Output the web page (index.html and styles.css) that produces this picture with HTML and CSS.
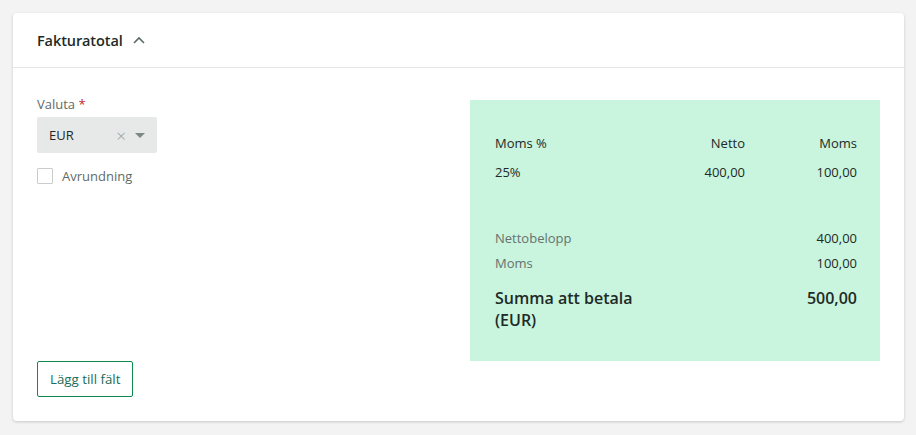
FILE: index.html
```html
<!DOCTYPE html>
<html lang="sv">
<head>
<meta charset="utf-8">
<title>Fakturatotal</title>
<link rel="stylesheet" href="styles.css">
</head>
<body>
<section class="card">
  <header class="card-head">
    <h2 class="title">Fakturatotal</h2>
    <svg class="chev" width="12" height="8" viewBox="0 0 12 8"><path d="M1 7 L6 2 L11 7" fill="none" stroke="#5b6b66" stroke-width="1.6"/></svg>
  </header>
  <div class="card-body">
    <div class="row">
      <div class="form">
        <label class="label">Valuta <span class="req">*</span></label>
        <div class="select">
          <span class="sel-val">EUR</span>
          <span class="sel-x">×</span>
          <span class="sel-arrow"></span>
        </div>
        <label class="check"><span class="box"></span><span class="check-text">Avrundning</span></label>
      </div>
      <div class="panel">
        <div class="vat-row vat-head">
          <span class="c1">Moms %</span><span class="c2">Netto</span><span class="c3">Moms</span>
        </div>
        <div class="vat-row">
          <span class="c1">25%</span><span class="c2">400,00</span><span class="c3">100,00</span>
        </div>
        <div class="sum-row first"><span class="muted">Nettobelopp</span><span>400,00</span></div>
        <div class="sum-row"><span class="muted">Moms</span><span>100,00</span></div>
        <div class="total-row"><span class="total-label">Summa att betala<br>(EUR)</span><span>500,00</span></div>
      </div>
    </div>
    <button class="btn">Lägg till fält</button>
  </div>
</section>
</body>
</html>
```
FILE: styles.css
```css
* { box-sizing: border-box; }
html, body { margin: 0; }
body {
  background: #f2f3f2;
  padding: 13px 12px 13px 13px;
  font-family: "Open Sans", "Noto Sans", sans-serif;
  font-size: 13px;
  color: #1d2a26;
}
.card {
  background: #fff;
  border-radius: 4px;
  box-shadow: 0 1px 3px rgba(0,0,0,0.18);
  height: 408px;
  display: flex;
  flex-direction: column;
}
.card-head {
  height: 55px;
  border-bottom: 1px solid #e4e7e6;
  display: flex;
  align-items: center;
  padding: 0 24px;
  gap: 9px;
}
.title {
  margin: 0;
  font-size: 14.5px;
  font-weight: 600;
  color: #1d2a26;
  letter-spacing: -0.1px;
}
.chev { margin-top: -1px; margin-left: 1px; }
.card-body {
  flex: 1;
  padding: 32px 24px 24px 24px;
  display: flex;
  flex-direction: column;
}
.row { display: flex; justify-content: space-between; }
.form { display: flex; flex-direction: column; margin-top: -6px; }
.label { color: #5f6b67; line-height: 20px; }
.req { color: #c0262d; }
.select {
  margin-top: 3px;
  width: 120px;
  height: 36px;
  background: #e6e9e8;
  border-radius: 2px;
  display: flex;
  align-items: center;
  padding: 0 12px;
}
.sel-val { flex: 1; color: #1d2a26; }
.sel-x { color: #939c98; font-size: 17px; font-weight: 300; margin-right: 9px; line-height: 1; }
.sel-arrow {
  width: 0; height: 0;
  border-left: 5px solid transparent;
  border-right: 5px solid transparent;
  border-top: 5px solid #7d8783;
  margin-top: 1px;
}
.check { display: flex; align-items: center; margin-top: 14px; gap: 9px; }
.box {
  width: 16px; height: 16px;
  border: 1px solid #c9cecc;
  border-radius: 1px;
  background: #fff;
}
.check-text { color: #5f6b67; }
.panel {
  width: 410px;
  height: 261px;
  background: #c9f4de;
  padding: 33px 23px 0 25px;
}
.vat-row { display: flex; line-height: 20px; height: 29px; }
.vat-row .c1 { flex: 1; }
.vat-row .c2 { width: 80px; text-align: right; }
.vat-row .c3 { width: 112px; text-align: right; }
.sum-row { display: flex; justify-content: space-between; line-height: 20px; height: 25px; }
.sum-row.first { margin-top: 37px; }
.muted { color: #66726e; }
.total-row {
  display: flex;
  justify-content: space-between;
  font-size: 16px;
  font-weight: 600;
  line-height: 22px;
  margin-top: 9px;
}
.btn {
  margin-top: 0;
  align-self: flex-start;
  height: 36px;
  padding: 0 12px;
  background: #fff;
  border: 1px solid #0f8a4f;
  border-radius: 2px;
  color: #1c6e57;
  font-family: inherit;
  font-size: 13.3px;
}
```
